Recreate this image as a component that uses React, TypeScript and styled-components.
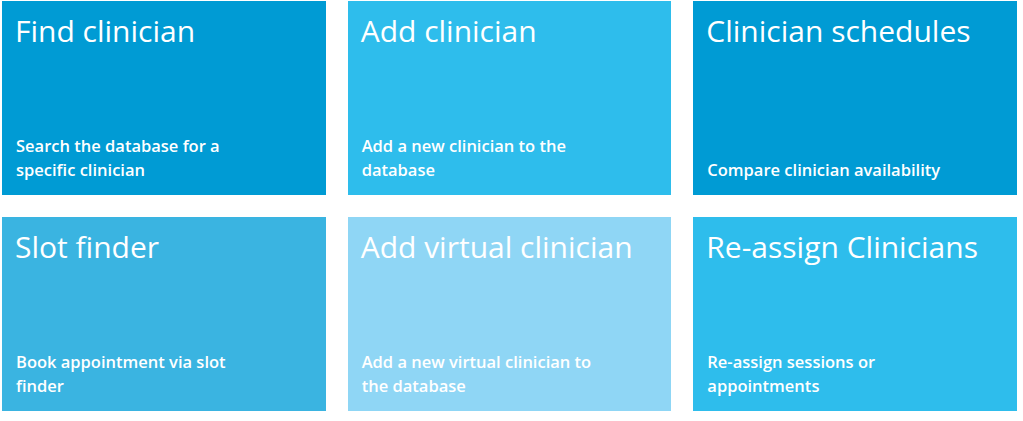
import React from "react";
import styled, { createGlobalStyle } from "styled-components";

const GlobalStyle = createGlobalStyle`
  body {
    margin: 0;
    background: #ffffff;
    font-family: "Open Sans", "Noto Sans", sans-serif;
  }
`;

const Grid = styled.div`
  display: grid;
  grid-template-columns: repeat(3, 1fr);
  column-gap: 22px;
  row-gap: 22px;
  width: 1015px;
  padding: 1px 0 0 2px;
`;

const Tile = styled.a<{ $bg: string }>`
  display: flex;
  flex-direction: column;
  justify-content: space-between;
  height: 194px;
  box-sizing: border-box;
  padding: 12px 12px 13px 14px;
  background-color: ${(p) => p.$bg};
  color: #ffffff;
  text-decoration: none;
  cursor: pointer;
`;

const Title = styled.h2`
  margin: 0 0 0 -1px;
  font-size: 30px;
  font-weight: 400;
  line-height: 36px;
`;

const Description = styled.p`
  margin: 0;
  max-width: 245px;
  font-size: 16.5px;
  font-weight: 600;
  line-height: 24px;
`;

const tiles = [
  { title: "Find clinician", text: "Search the database for a specific clinician", bg: "#009bd4" },
  { title: "Add clinician", text: "Add a new clinician to the database", bg: "#2ebdec" },
  { title: "Clinician schedules", text: "Compare clinician availability", bg: "#009bd4" },
  { title: "Slot finder", text: "Book appointment via slot finder", bg: "#3ab4e1" },
  { title: "Add virtual clinician", text: "Add a new virtual clinician to the database", bg: "#8fd6f5" },
  { title: "Re-assign Clinicians", text: "Re-assign sessions or appointments", bg: "#2ebdec" },
];

export default function App() {
  return (
    <>
      <GlobalStyle />
      <Grid>
        {tiles.map((t) => (
          <Tile key={t.title} $bg={t.bg}>
            <Title>{t.title}</Title>
            <Description>{t.text}</Description>
          </Tile>
        ))}
      </Grid>
    </>
  );
}
